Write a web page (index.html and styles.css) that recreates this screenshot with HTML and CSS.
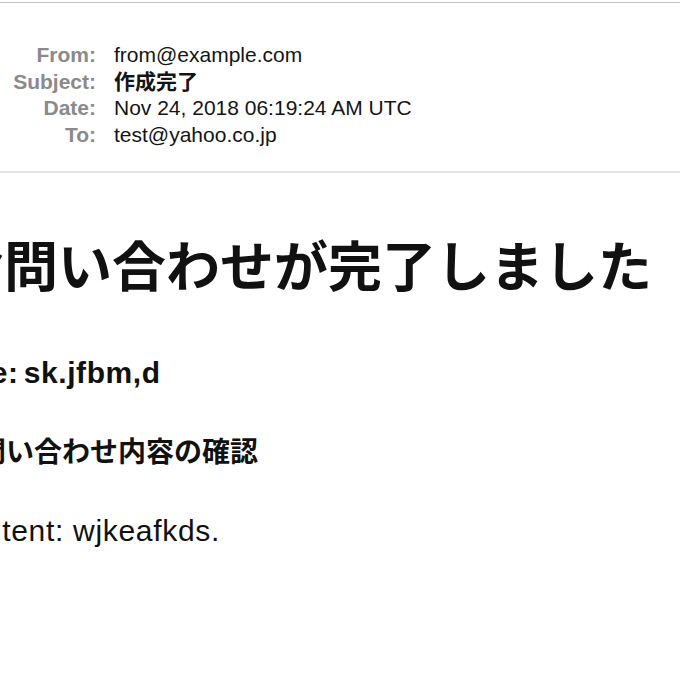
FILE: index.html
```html
<!DOCTYPE html>
<html lang="ja">
<head>
<meta charset="utf-8">
<title>作成完了</title>
<link rel="stylesheet" href="styles.css">
</head>
<body>
<div class="page">
  <header class="mail-head">
    <div class="fields">
      <div class="label">From:</div><div class="value">from@example.com</div>
      <div class="label">Subject:</div><div class="value subject">作成完了</div>
      <div class="label">Date:</div><div class="value">Nov 24, 2018 06:19:24 AM UTC</div>
      <div class="label">To:</div><div class="value">test@yahoo.co.jp</div>
    </div>
  </header>
  <main class="mail-body">
    <h1 class="title">お問い合わせが完了しました</h1>
    <p class="name">Name: sk.jfbm,d</p>
    <h2 class="sub">お問い合わせ内容の確認</h2>
    <p class="content">Content: wjkeafkds.</p>
  </main>
</div>
</body>
</html>
```

FILE: styles.css
```css
html, body {
  margin: 0;
  padding: 0;
  background: #ffffff;
}
body {
  width: 680px;
  height: 680px;
  overflow: hidden;
  font-family: "Liberation Sans", "Noto Sans CJK JP", sans-serif;
  color: #111111;
}
.page {
  padding-top: 2px;
}
.mail-head {
  border-top: 1px solid #c2c2c2;
  border-bottom: 2px solid #e4e4e4;
  padding: 39px 0 22px;
}
.fields {
  display: grid;
  grid-template-columns: 96px auto;
  column-gap: 18px;
  font-size: 21px;
  line-height: 26.7px;
}
.label {
  text-align: right;
  font-weight: bold;
  color: #8a8a8a;
  white-space: nowrap;
}
.value {
  color: #141414;
  white-space: nowrap;
}
.subject {
  font-weight: bold;
}
.mail-body {
  margin-left: -50px;
  white-space: nowrap;
}
.title {
  margin: 64px 0 0 0;
  font-size: 54px;
  line-height: 1;
  font-weight: bold;
  font-family: "Noto Sans CJK JP", sans-serif;
}
.name {
  margin: 67px 0 0 -26px;
  font-size: 30px;
  line-height: 1;
  font-weight: bold;
  letter-spacing: 0.6px;
  word-spacing: -4px;
}
.sub {
  margin: 48px 0 0 0;
  font-size: 28px;
  line-height: 1;
  font-weight: bold;
  font-family: "Noto Sans CJK JP", sans-serif;
}
.content {
  margin: 52px 0 0 -5px;
  font-size: 30px;
  line-height: 1;
  letter-spacing: 0.7px;
}
```
